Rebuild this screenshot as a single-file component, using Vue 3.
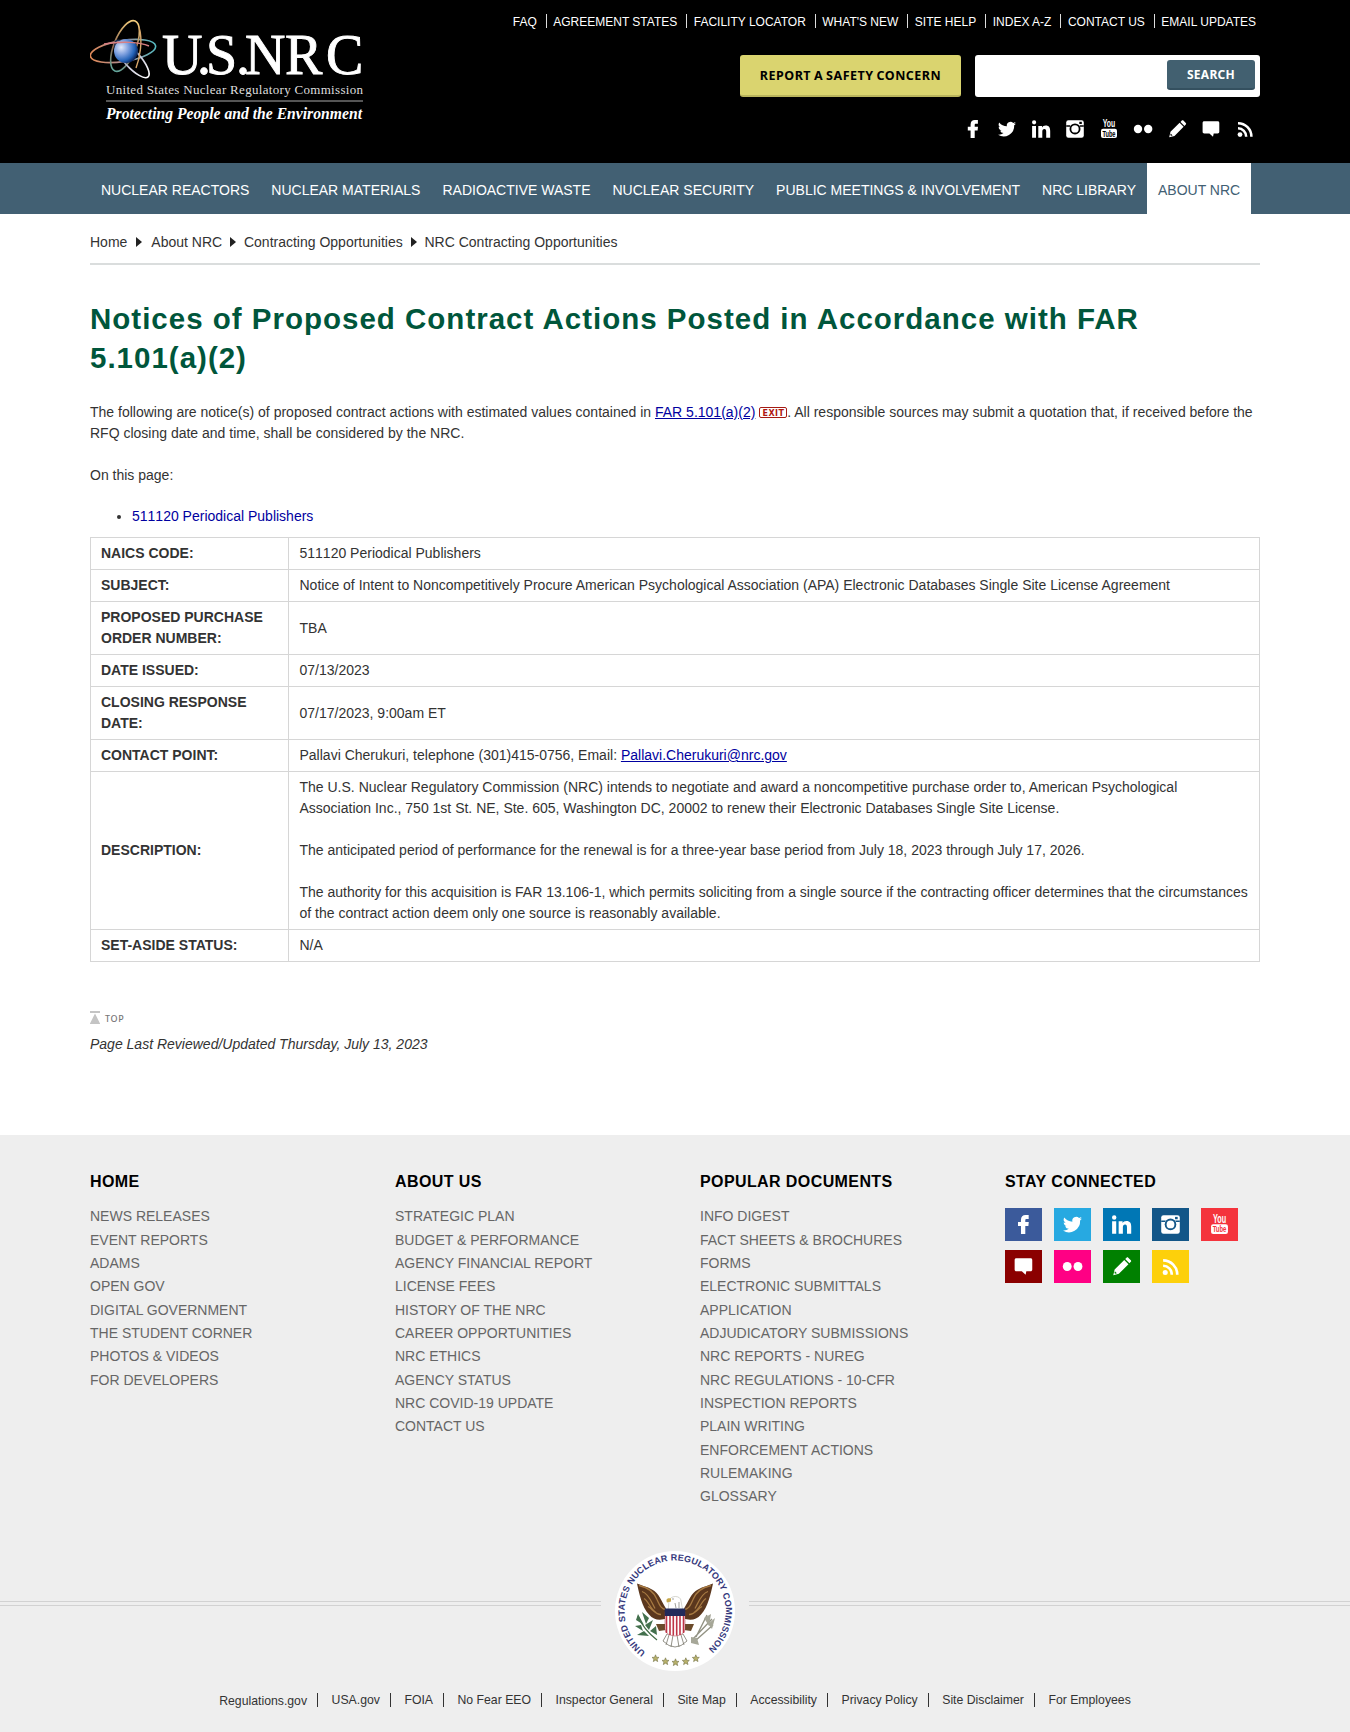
<script setup>
import { h } from 'vue'

const topLinks = ['FAQ', 'AGREEMENT STATES', 'FACILITY LOCATOR', "WHAT'S NEW", 'SITE HELP', 'INDEX A-Z', 'CONTACT US', 'EMAIL UPDATES']
const navItems = ['NUCLEAR REACTORS', 'NUCLEAR MATERIALS', 'RADIOACTIVE WASTE', 'NUCLEAR SECURITY', 'PUBLIC MEETINGS & INVOLVEMENT', 'NRC LIBRARY', 'ABOUT NRC']
const crumbs = ['Home', 'About NRC', 'Contracting Opportunities', 'NRC Contracting Opportunities']
const headerSocial = ['facebook', 'twitter', 'linkedin', 'instagram', 'youtube', 'flickr', 'pencil', 'comment', 'rss']
const tiles = [
  { name: 'facebook', color: '#3b5a9b' },
  { name: 'twitter', color: '#27a9e1' },
  { name: 'linkedin', color: '#0077b5' },
  { name: 'instagram', color: '#125688' },
  { name: 'youtube', color: '#f4333c' },
  { name: 'comment', color: '#8b0000' },
  { name: 'flickr', color: '#ff0084' },
  { name: 'pencil', color: '#008000' },
  { name: 'rss', color: '#fdd00b' },
]
const columns = [
  { title: 'HOME', links: ['NEWS RELEASES', 'EVENT REPORTS', 'ADAMS', 'OPEN GOV', 'DIGITAL GOVERNMENT', 'THE STUDENT CORNER', 'PHOTOS & VIDEOS', 'FOR DEVELOPERS'] },
  { title: 'ABOUT US', links: ['STRATEGIC PLAN', 'BUDGET & PERFORMANCE', 'AGENCY FINANCIAL REPORT', 'LICENSE FEES', 'HISTORY OF THE NRC', 'CAREER OPPORTUNITIES', 'NRC ETHICS', 'AGENCY STATUS', 'NRC COVID-19 UPDATE', 'CONTACT US'] },
  { title: 'POPULAR DOCUMENTS', links: ['INFO DIGEST', 'FACT SHEETS & BROCHURES', 'FORMS', 'ELECTRONIC SUBMITTALS APPLICATION', 'ADJUDICATORY SUBMISSIONS', 'NRC REPORTS - NUREG', 'NRC REGULATIONS - 10-CFR', 'INSPECTION REPORTS', 'PLAIN WRITING', 'ENFORCEMENT ACTIONS', 'RULEMAKING', 'GLOSSARY'] },
]
const bottomLinks = ['Regulations.gov', 'USA.gov', 'FOIA', 'No Fear EEO', 'Inspector General', 'Site Map', 'Accessibility', 'Privacy Policy', 'Site Disclaimer', 'For Employees']

const shapes = {
  facebook: 'M6.6 18V10.4H3.8V6.7h2.8V4.5C6.6 1.6 8.300.1 10.900.1h3v3.600h-1.900c-1 0-1.300.4-1.300 1.300v1.700h3.300l-.4 3.700h-2.900V18z',
  twitter: 'M18 3.4a7.500 7.500 0 0 1-2.100.6 3.700 3.700 0 0 0 1.600-2c-.7.4-1.500.7-2.300.9a3.700 3.700 0 0 0-6.300 3.400A10.500 10.500 0 0 1 1.200 2.400a3.700 3.700 0 0 0 1.200 4.900c-.6 0-1.200-.2-1.700-.5a3.700 3.700 0 0 0 3 3.700c-.5.1-1.100.2-1.700.1a3.700 3.700 0 0 0 3.500 2.500A7.400 7.400 0 0 1 0 14.700a10.500 10.500 0 0 0 16.200-9.400A7.500 7.500 0 0 0 18 3.400z',
  linkedin: 'M.1 5.900h3.900v11.900H.1zM2.100.2a2.100 2.100 0 1 1 0 4.200 2.100 2.100 0 0 1 0-4.200zM6.300 5.900h3.700v1.600c.6-1 1.900-1.900 3.700-1.900 3.400 0 4.500 2.100 4.500 5.400v6.800h-4v-6c0-1.700-.4-2.700-1.800-2.700s-2.100 1.100-2.100 2.700v6h-4z',
  pencil: 'M1.200 17.200l1.300-5.400L11.600 2.800l4 4L6.500 15.900zM12.500 1.900l1.300-1.300c.5-.5 1.100-.5 1.600 0l2.400 2.400c.5.500.5 1.100 0 1.600l-1.300 1.300z',
  comment: 'M2.300 1.300h13.300c1.100 0 1.700.6 1.700 1.700v8.800c0 1.100-.6 1.700-1.700 1.700h-3.900l-.7 3.200-3.600-3.200H2.300c-1.100 0-1.700-.6-1.700-1.700V3c0-1.100.6-1.700 1.700-1.700z',
}

// 18px social glyph; `cut` is the colour that shows through the glyph
const SocialIcon = (props) => {
  const { name, cut } = props
  let body
  if (shapes[name]) {
    body = [h('path', { d: shapes[name] })]
    if (name === 'pencil') body.push(h('path', { d: 'M2.700 13.500l1.900 1.900-1.600.4-.7-.7z', fill: cut }))
  } else if (name === 'instagram') {
    body = [
      h('rect', { x: 0.2, y: 0.2, width: 17.6, height: 17.6, rx: 2.2 }),
      h('path', { d: 'M.2 5.200h4v1.500h-4zM13.800 5.200h4v1.500h-4z', fill: cut }),
      h('circle', { cx: 9, cy: 8.9, r: 5.500, fill: cut }),
      h('circle', { cx: 9, cy: 8.9, r: 3.700 }),
      h('rect', { x: 13.300, y: 1.800, width: 2.500, height: 2.200, fill: cut }),
    ]
  } else if (name === 'youtube') {
    const t = { 'text-anchor': 'middle', 'font-family': 'Liberation Sans Narrow, Liberation Sans, sans-serif', 'font-weight': 700, lengthAdjust: 'spacingAndGlyphs' }
    body = [
      h('text', { ...t, x: 9, y: 7.200, 'font-size': 11.500, textLength: 12.500 }, 'You'),
      h('rect', { x: 1, y: 8.700, width: 16, height: 9.300, rx: 2 }),
      h('text', { ...t, x: 9, y: 16.500, 'font-size': 9, textLength: 13, fill: cut }, 'Tube'),
    ]
  } else if (name === 'flickr') {
    body = [h('circle', { cx: 4, cy: 9, r: 4.200 }), h('circle', { cx: 14.200, cy: 9, r: 4.200 })]
  } else {
    body = [
      h('circle', { cx: 4, cy: 14.600, r: 2.400 }),
      h('path', { d: 'M2 8.300a8.300 8.300 0 0 1 8.200 8.500M2 3.200a13.400 13.400 0 0 1 13.400 13.600', fill: 'none', stroke: 'currentColor', 'stroke-width': 2.500 }),
    ]
  }
  return h('svg', { width: 18, height: 18, viewBox: '0 0 18 18', fill: 'currentColor', overflow: 'visible' }, body)
}
SocialIcon.props = ['name', 'cut']
</script>

<template>
  <div class="page">
    <header class="header">
      <div class="container header-row">
        <svg class="logo" width="280" height="130" viewBox="0 0 280 130">
          <defs>
            <radialGradient id="globe" cx=".3" cy=".35" r=".75">
              <stop offset="0" stop-color="#e3e9fa" />
              <stop offset=".4" stop-color="#7ea0df" />
              <stop offset=".75" stop-color="#2463b8" />
              <stop offset="1" stop-color="#071c4e" />
            </radialGradient>
            <linearGradient id="orbitA" x1="0" x2="1">
              <stop offset="0" stop-color="#e08a58" />
              <stop offset=".5" stop-color="#a98a95" />
              <stop offset="1" stop-color="#54b9c0" />
            </linearGradient>
            <linearGradient id="orbitB" x1="0" x2="0" y1="0" y2="1">
              <stop offset="0" stop-color="#f6cf7d" />
              <stop offset=".6" stop-color="#8c6650" />
              <stop offset="1" stop-color="#62a69c" />
            </linearGradient>
            <linearGradient id="orbitC" x1="0" x2="1">
              <stop offset="0" stop-color="#16294f" />
              <stop offset=".6" stop-color="#ccd" />
              <stop offset="1" stop-color="#fff" />
            </linearGradient>
          </defs>
          <g fill="none" stroke-width="1.600">
            <ellipse cx="33" cy="51" rx="33" ry="10.500" transform="rotate(-9 33 51)" stroke="url(#orbitA)" />
            <ellipse cx="35" cy="46" rx="11" ry="27" transform="rotate(22 35 46)" stroke="url(#orbitB)" />
            <ellipse cx="42" cy="59" rx="24" ry="8" transform="rotate(48 42 59)" stroke="url(#orbitC)" />
          </g>
          <circle cx="36" cy="51" r="12" fill="url(#globe)" />
          <path d="M49 27C53 40 50 58 46 68" fill="none" stroke="#d8a66a" stroke-width="1.400" />
          <path d="M14 44C32 41 50 42 59 46" fill="none" stroke="#d77f83" stroke-width="1.400" />
          <g fill="#fff" font-family="Liberation Serif, serif">
            <text y="74" x="72 107 116 146 155 195 236" font-size="56" stroke="#fff" stroke-width=".9">U.S.NRC</text>
            <text x="16" y="94" font-size="13" textLength="257" fill="#dedede">United States Nuclear Regulatory Commission</text>
            <text x="16" y="119" font-size="16" font-weight="700" font-style="italic" textLength="256" lengthAdjust="spacingAndGlyphs">Protecting People and the Environment</text>
          </g>
          <path d="M16 101H273" stroke="#aaa" />
        </svg>
        <div class="header-side">
          <ul class="top-links">
            <li v-for="l in topLinks" :key="l">{{ l }}</li>
          </ul>
          <div class="actions">
            <a class="report">REPORT A SAFETY CONCERN</a>
            <div class="search"><button>SEARCH</button></div>
          </div>
          <div class="social">
            <SocialIcon v-for="s in headerSocial" :key="s" :name="s" cut="#000" />
          </div>
        </div>
      </div>
    </header>

    <nav class="nav">
      <ul class="container">
        <li v-for="n in navItems" :key="n" :class="{ active: n === 'ABOUT NRC' }">{{ n }}</li>
      </ul>
    </nav>

    <main class="container main">
      <div class="crumbs">
        <template v-for="(c, i) in crumbs" :key="c">
          <svg v-if="i" :class="{ first: i === 1 }" width="6" height="10" viewBox="0 0 6 10"><path d="M0 0L6 5L0 10z" fill="#222" /></svg>
          <span>{{ c }}</span>
        </template>
      </div>

      <h1>Notices of Proposed Contract Actions Posted in Accordance with FAR 5.101(a)(2)</h1>
      <p>The following are notice(s) of proposed contract actions with estimated values contained in <a class="link">FAR 5.101(a)(2)</a> <svg class="exit" width="28" height="11" viewBox="0 0 28 11"><rect x=".5" y=".5" width="27" height="10" rx="1.500" fill="#fff" stroke="#a51c14" /><text x="3.500" y="8.500" font-size="8" font-weight="700" font-family="DejaVu Sans, sans-serif" fill="#b01810" textLength="21.500">EXIT</text></svg>. All responsible sources may submit a quotation that, if received before the RFQ closing date and time, shall be considered by the NRC.</p>
      <p>On this page:</p>
      <ul class="toc"><li><a class="code">511120 Periodical Publishers</a></li></ul>

      <table>
        <tbody>
          <tr><th>NAICS CODE:</th><td class="code">511120 Periodical Publishers</td></tr>
          <tr><th>SUBJECT:</th><td>Notice of Intent to Noncompetitively Procure American Psychological Association (APA) Electronic Databases Single Site License Agreement</td></tr>
          <tr><th>PROPOSED PURCHASE ORDER NUMBER:</th><td>TBA</td></tr>
          <tr><th>DATE ISSUED:</th><td>07/13/2023</td></tr>
          <tr><th>CLOSING RESPONSE DATE:</th><td>07/17/2023, 9:00am ET</td></tr>
          <tr><th>CONTACT POINT:</th><td>Pallavi Cherukuri, telephone (301)415-0756, Email: <a class="link">Pallavi.Cherukuri@nrc.gov</a></td></tr>
          <tr>
            <th>DESCRIPTION:</th>
            <td>
              The U.S. Nuclear Regulatory Commission (NRC) intends to negotiate and award a noncompetitive purchase order to, American Psychological Association Inc., 750 1st St. NE, Ste. 605, Washington DC, 20002 to renew their Electronic Databases Single Site License.<br><br>
              The anticipated period of performance for the renewal is for a three-year base period from July 18, 2023 through July 17, 2026.<br><br>
              The authority for this acquisition is FAR 13.106-1, which permits soliciting from a single source if the contracting officer determines that the circumstances of the contract action deem only one source is reasonably available.
            </td>
          </tr>
          <tr><th>SET-ASIDE STATUS:</th><td>N/A</td></tr>
        </tbody>
      </table>

      <div class="to-top">
        <svg width="10" height="13" viewBox="0 0 10 13" fill="#c4c4c4"><path d="M0 0h10v2H0zM5 2.500L10.300 13H-.3z" /></svg>
        <span>TOP</span>
      </div>
      <div class="updated">Page Last Reviewed/Updated Thursday, July 13, 2023</div>
    </main>

    <footer class="footer">
      <div class="container columns">
        <section v-for="c in columns" :key="c.title">
          <h2>{{ c.title }}</h2>
          <ul>
            <li v-for="l in c.links" :key="l">{{ l }}</li>
          </ul>
        </section>
        <section>
          <h2>STAY CONNECTED</h2>
          <div class="tiles">
            <a v-for="t in tiles" :key="t.name" :style="{ background: t.color }"><SocialIcon :name="t.name" :cut="t.color" /></a>
          </div>
        </section>
      </div>

      <div class="seal-row">
        <i class="rule"></i>
        <svg class="seal" width="124" height="120" viewBox="-62 -60 124 120">
          <defs>
            <path id="ring" d="M-29.500 41A50.500 50.500 0 1 1 31.500 39.500" />
            <path id="star" d="M0-3.700L1-1.200 3.500-1.100 1.600.6 2.200 3.100 0 1.700-2.200 3.100-1.600.6-3.500-1.100-1-1.200z" />
            <g id="wing">
              <path d="M-9-8C-13-14-16-24-23-27C-28-30-34-31-38-33C-36-24-33-9-26-2C-21 4-15 4-8 2z" fill="#5b371d" />
              <path d="M-36-31C-27-29-21-25-18-17C-15-10-13-7-9-7M-33-25C-26-23-23-13-20-8M-31-18C-27-16-25-8-19-4M-27-10C-23-8-20-2-14-2" fill="none" stroke="#a87b43" stroke-width="1.300" />
            </g>
          </defs>
          <circle r="60" fill="#fff" />
          <text font-family="Liberation Sans, sans-serif" font-size="9" font-weight="700" fill="#35387c">
            <textPath href="#ring" textLength="249">UNITED STATES NUCLEAR REGULATORY COMMISSION</textPath>
          </text>
          <use href="#wing" transform="translate(0 5.500)" />
          <use href="#wing" transform="translate(0 5.500) scale(-1 1)" />
          <path d="M-9 13L-19 13 -16 20 -9 19zM9 13L19 13 16 20 9 19z" fill="#6b4a2a" />
          <path d="M-7 1L-6-10C-5-16 6-16 6-10L8 1z" fill="#fff" stroke="#b9b9ae" stroke-width=".6" />
          <path d="M-4-12.500C-9-13.500-9-10.500-8-8.500L-4-9.500z" fill="#c6a84c" />
          <path d="M-3-12h2M0-8l1 5M4-9v6" stroke="#787872" stroke-width=".7" />
          <path d="M-8 23L-12 30Q0 42 12 30L8 23z" fill="#fff" stroke="#777569" stroke-width=".8" />
          <path d="M-6 24l-3 10M-2 24l-2 12M2 24l2 12M6 24l3 10" stroke="#777569" stroke-width=".8" />
          <path d="M-10 1H10V18Q10 24 0 25Q-10 24-10 18z" fill="#fff" stroke="#a93a46" stroke-width=".5" />
          <path d="M-8.500 5V22M-5 5V24M-1.700 5V24.500M1.700 5V24.500M5 5V24M8.500 5V22" stroke="#be3446" stroke-width="1.600" />
          <path d="M-10.300-2.500H10.300V5H-10.300z" fill="#232a5a" />
          <path d="M-37 5C-33 15-27 22-18 29" fill="none" stroke="#406b43" stroke-width="1.200" />
          <path d="M-37 3l6 11-8-5zM-33 1l4 12 3-6zM-34 14l-6 1 8 5zM-30 14l8-5-4 10zM-31 20l-7 4 12 1zM-25 20l6-5 1 9z" fill="#43704d" />
          <path d="M18 28L37 8M20 30L38 14M21 26L32 4" stroke="#929283" stroke-width="1.400" />
          <path d="M29 7l7-4-2 12zM33 13l7-6-3 11zM16 26l6 1 2 7-8-2z" fill="#a6a798" />
          <g fill="#b8b16a" stroke="#747246" stroke-width=".6">
            <use href="#star" x="-19.500" y="47.500" /><use href="#star" x="-9.500" y="50.500" /><use href="#star" x=".5" y="51.500" /><use href="#star" x="10.800" y="50.500" /><use href="#star" x="20.800" y="47.500" />
          </g>
        </svg>
        <i class="rule"></i>
      </div>

      <ul class="bottom-links">
        <li v-for="l in bottomLinks" :key="l">{{ l }}</li>
      </ul>
    </footer>
  </div>
</template>

<style>
body { margin: 0; background: #fff; }
</style>

<style scoped>
.page { font: 14px/21px "Liberation Sans", Arial, sans-serif; color: #333; }
.page * { box-sizing: border-box; }
ul { list-style: none; margin: 0; padding: 0; }
.container { width: 1170px; margin: 0 auto; }
.header { background: #000; height: 163px; }
.header-row { display: flex; justify-content: space-between; }
.logo { flex: none; }
.header-side { display: flex; flex-direction: column; align-items: flex-end; }
.top-links { display: flex; font-size: 12px; line-height: 14px; color: #fff; padding: 14px 4px 0 0; height: 55px; }
.top-links li { height: 14px; padding-top: 1px; white-space: nowrap; }
.top-links li + li { border-left: 1px solid #ddd; margin-left: 9px; padding-left: 6.500px; }
.actions { display: flex; gap: 14px; height: 42px; }
.report, .search button { font-family: "Noto Sans", "Open Sans", sans-serif; font-weight: 700; font-size: 12.500px; letter-spacing: .5px; word-spacing: -.8px; }
.report { width: 221px; background: #dad46f; border-bottom: 2px solid #b9b45c; border-radius: 3px; color: #000; text-align: center; line-height: 41px; white-space: nowrap; }
.search { width: 285px; background: #fff; border-radius: 3px; padding: 5px; display: flex; justify-content: flex-end; }
.search button { width: 88px; height: 30px; padding: 1px 0 0; border: 0; border-bottom: 2px solid #34505f; border-radius: 3px; background: #426070; color: #fff; line-height: 28px; font-size: 12px; letter-spacing: .3px; }
.social { display: flex; gap: 16px; color: #fff; padding: 23px 6px 0 0; }
.nav { background: #426073; height: 51px; }
.nav ul { display: flex; }
.nav li { padding: 0 11px; line-height: 54px; height: 51px; color: #fff; white-space: nowrap; }
.nav .active { background: #fff; color: #426073; }
.crumbs { display: flex; align-items: center; height: 51px; padding-top: 7px; border-bottom: 2px solid #dadddd; }
.crumbs svg { margin: 0 7.900px; }
.crumbs svg.first { margin: 0 9px; }
h1 { margin: 34px 0 25px; font-size: 29.500px; line-height: 39px; letter-spacing: 1px; color: #00563b; }
p { margin: 0 0 21px; }
.link { color: #0000a0; text-decoration: underline; }
.exit { vertical-align: -1px; }
.toc { list-style: disc; padding-left: 42px; margin: -1px 0 10px; }
.toc a { color: #0000a0; }
.code { font-kerning: none; }
table { width: 1170px; border-collapse: collapse; table-layout: fixed; }
th, td { border: 1px solid #d6d6d6; padding: 5px 10px; text-align: left; vertical-align: middle; }
td { padding-left: 10.500px; }
th { width: 198px; }
.to-top { display: flex; align-items: flex-end; gap: 5px; margin-top: 48px; height: 14px; }
.to-top span { font: 9px/10px "Noto Sans", sans-serif; font-weight: 500; color: #777; letter-spacing: .6px; }
.updated { font-style: italic; margin-top: 10px; }
.footer { margin-top: 80px; background: #eee; height: 597px; }
.columns { display: grid; grid-template-columns: repeat(3, 305px) 255px; height: 417px; padding-top: 36px; }
h2 { margin: 0 0 13px; font-size: 16px; line-height: 21px; letter-spacing: .4px; color: #000; }
.columns ul { width: 225px; line-height: 23.330px; color: #666; padding-top: .3px; }
.tiles { display: flex; flex-wrap: wrap; gap: 9px 12px; padding-top: 3px; }
.tiles a { width: 37px; height: 33px; color: #fff; display: flex; align-items: center; justify-content: center; }
.tiles svg { width: 19px; height: 19px; }
.seal-row { display: flex; align-items: flex-start; height: 120px; }
.seal { flex: none; margin-top: -1px; }
.rule { flex: 1; height: 5px; margin-top: 49px; border-top: 1px solid #d2d2d2; border-bottom: 1px solid #d2d2d2; }
.rule:first-child { margin-right: 12px; }
.rule:last-child { margin-left: 12px; }
.bottom-links { display: flex; justify-content: center; font-size: 12.250px; line-height: 14px; padding-top: 21px; }
.bottom-links li { white-space: nowrap; height: 14px; }
.bottom-links li:first-child { padding-top: 1px; }
.bottom-links li + li { border-left: 1px solid #333; margin-left: 10px; padding-left: 13.500px; }
</style>
